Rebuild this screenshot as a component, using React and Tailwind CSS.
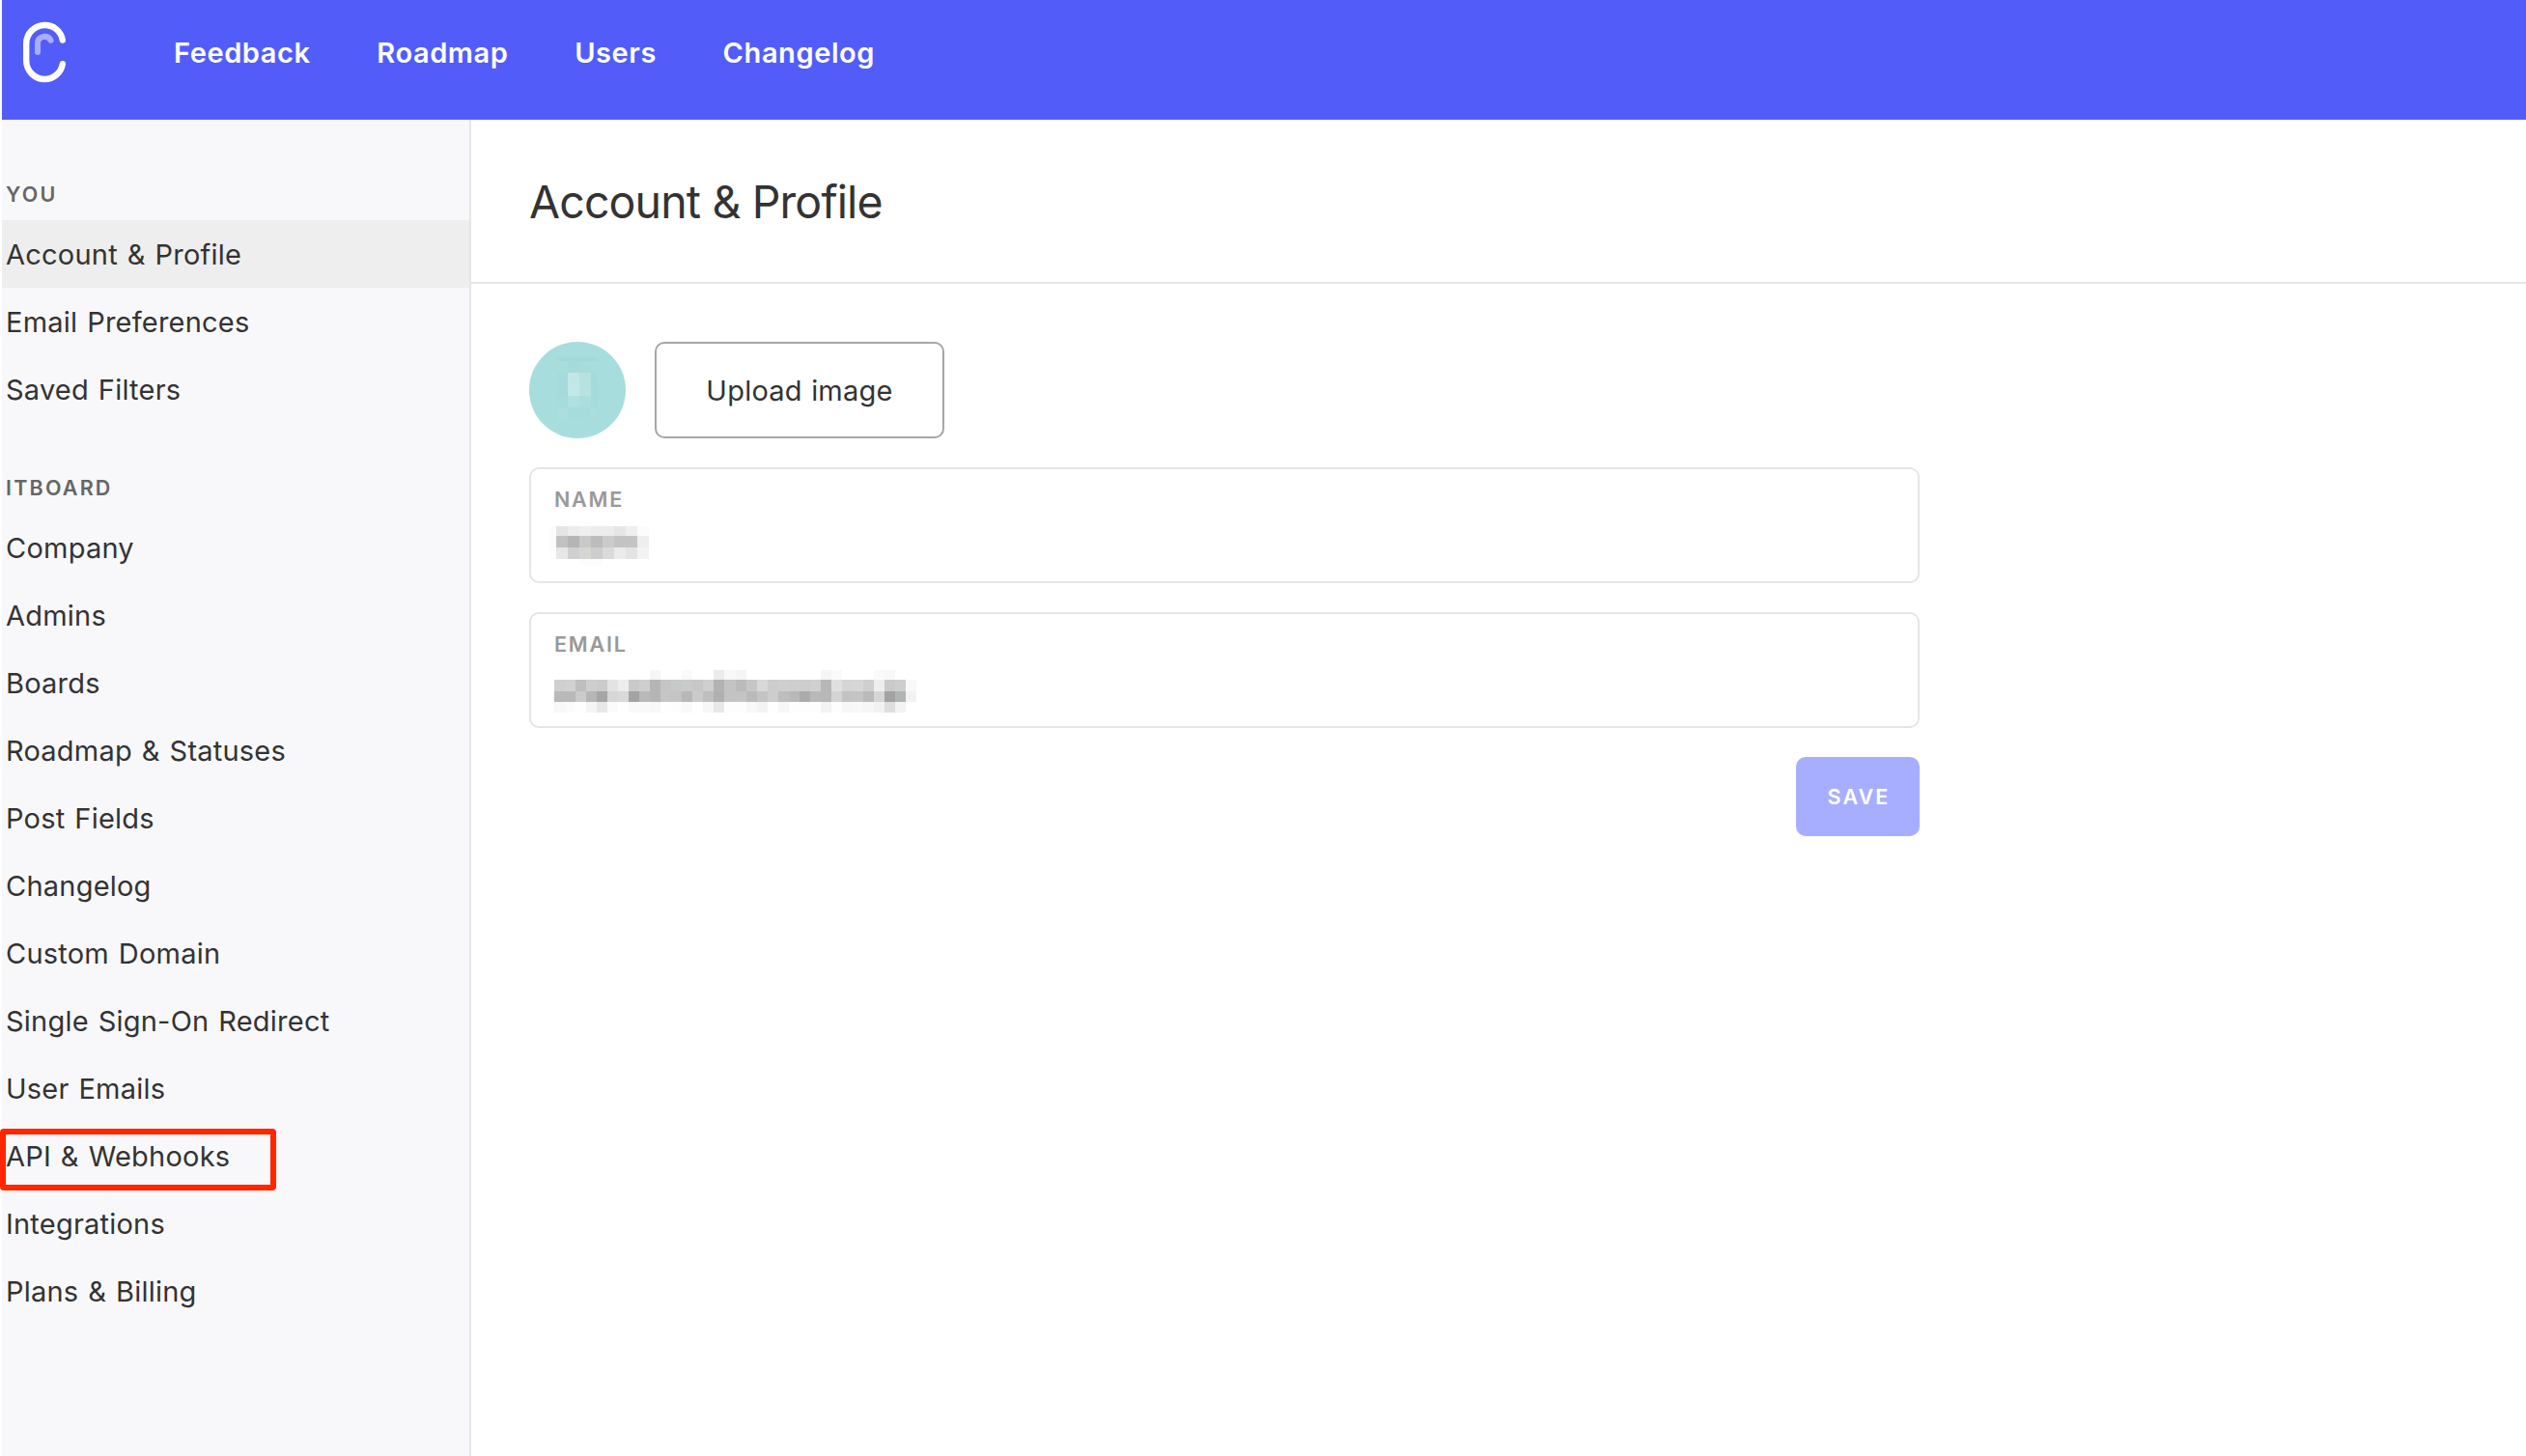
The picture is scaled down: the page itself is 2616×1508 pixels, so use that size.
const navLinks = ["Feedback", "Roadmap", "Users", "Changelog"];

const sections = [
  {
    title: "YOU",
    items: [
      { label: "Account & Profile", active: true },
      { label: "Email Preferences" },
      { label: "Saved Filters" },
    ],
  },
  {
    title: "ITBOARD",
    items: [
      { label: "Company" },
      { label: "Admins" },
      { label: "Boards" },
      { label: "Roadmap & Statuses" },
      { label: "Post Fields" },
      { label: "Changelog" },
      { label: "Custom Domain" },
      { label: "Single Sign-On Redirect" },
      { label: "User Emails" },
      { label: "API & Webhooks", marked: true },
      { label: "Integrations" },
      { label: "Plans & Billing" },
    ],
  },
];

// Redacted values: column edges, row edges and one colour per cell
const nameMosaic = {
  xs: [0, 7, 19, 31, 43, 55, 67, 79, 91, 103],
  ys: [0, 10, 22, 34, 41],
  rows: [
    "fcfcfc e5e5e5 ececec efefef ececec ececec e6e6e6 efefef fcfcfc",
    "fbfbfb c1c1c1 b5b5b5 c9c9c9 bcbcbc cbcbcb c4c4c4 c4c4c4 eeeeee",
    "fdfdfd e7e7e7 d0d0d0 d6d6d2 cdcdcd dadada ebebeb e3e3e3 f3f3f3",
    "ffffff ffffff ffffff fcfcfc fcfcfc ffffff ffffff ffffff ffffff",
  ],
};

const emailMosaic = {
  xs: Array.from({ length: 35 }, (_, i) => Math.round(i * 11.03)),
  ys: [0, 10, 22, 33, 44],
  rows: [
    "ffffff ffffff ffffff ffffff ffffff ffffff ffffff ffffff ffffff f5f5f5 ffffff ffffff fafafa ffffff ffffff ebebeb f8f8f8 f5f5f5 ffffff ffffff ffffff ffffff ffffff ffffff ffffff f5f5f5 fafafa ffffff ffffff ffffff fafafa f8f8f8 ffffff ffffff",
    "cfcfcf d1d1d1 bfbfbf cecece cbcbcb e3e3e3 ededed cacaca cecece b5b5b5 c5c5c5 c5c9c9 cacaca c7c7c7 cfcfcf b2b2b2 c3c3c3 bbbbbb c6c6c6 d8d8d8 cdcdcd cfcfcf cecece cdcdcd d0d0d0 b7b7b7 e0e0e0 d5d5d5 d7d7d7 cfcfcf eeeeee cacaca cdcdcd f9f9f7",
    "b9b9b9 b9b9b9 cbcbcb b6b6b6 a6a6a6 d7d7d7 d9d9d9 a3a3a3 b9b9b9 b5b5b5 c6c6c6 c4c4c4 b8b8b8 cbcbcb bfbfbf b0b0b0 c3c3c3 c4c4c4 bababa c4c4c4 cdcdcd bebebe b9b9b9 ababab b9b9b9 b8b8b8 d4d4d4 c3c3c3 c5c5c5 bababa d6d6d6 a2a2a2 b0b4b3 f2f2f2",
    "f8f8f8 fbfbfb fefefe f5f5f5 e8e8e8 fbfbfb ffffff f9f9f9 f9f9f9 f7f7f7 fefefe fdfdfd f9f9f9 fefefe f7f7f7 e8e8e8 fdfdfd fdfdfd f8f8f8 f3f3f3 fefefe f7f7f7 fdfdfd fdfdfd fdfdfd f3f3f3 fdfdfd f7f7f7 f8f8f8 f6f6f6 f2f2f2 dedede f3f3f3 ffffff",
  ],
};

const avatarMosaic = {
  xs: [0, 11, 23, 35, 42],
  ys: [0, 4, 16, 28, 40, 52, 64],
  rows: [
    "a0dada a0dada a0dada a0dada",
    "a9dddb a5dcdb a6dcdb a9dddb",
    "a5dbdb c3e7e7 b6e2e1 a4dada",
    "a4dbdb c3e8e8 b8e2e2 a4dbdb",
    "a6dcdc b1e0e0 acdedd a5dbdb",
    "abdedc a6dcdc a6dcdc aadedd",
  ],
};

function Mosaic({ data, className }) {
  const { xs, ys, rows } = data;
  const width = xs[xs.length - 1];
  const height = ys[ys.length - 1];

  return (
    <svg
      width={width}
      height={height}
      viewBox={`0 0 ${width} ${height}`}
      shapeRendering="crispEdges"
      className={className}
      aria-hidden="true"
    >
      {rows.map((row, r) =>
        row.split(" ").map((color, c) => (
          <rect
            key={`${r}-${c}`}
            x={xs[c]}
            y={ys[r]}
            width={xs[c + 1] - xs[c]}
            height={ys[r + 1] - ys[r]}
            fill={`#${color}`}
          />
        ))
      )}
    </svg>
  );
}

function Logo() {
  return (
    <svg width="48" height="66" viewBox="0 0 48 66" fill="none" strokeLinecap="round" className="shrink-0">
      <path
        d="M42.8 21.6C41.3 12.4 33.6 6 24.4 6C13.8 6 5.2 14.6 5.2 25.2V42.8C5.2 53.4 13.8 62 24.4 62C33.6 62 41.3 55.4 42.8 46.2"
        stroke="#fff"
        strokeWidth="6.4"
      />
      <path d="M17 34V25.2C17 17.2 27 15.5 30.6 21.7" stroke="#a8adff" strokeWidth="6" />
    </svg>
  );
}

function Header() {
  return (
    <header className="flex h-[124px] items-start bg-[#525df9] pl-5">
      <div className="pt-5">
        <Logo />
      </div>
      <nav className="ml-[110px] flex gap-[68.7px]">
        {navLinks.map((link) => (
          <a key={link} href="#" className="text-[29px] leading-[109px] font-semibold tracking-[0.58px] text-white">
            {link}
          </a>
        ))}
      </nav>
    </header>
  );
}

function SidebarItem({ item }) {
  return (
    <li className={item.active ? "relative h-[70px] bg-[#eeeeee]" : "relative h-[70px]"}>
      <a href="#" className="block pl-[4px] text-[29px] leading-[72px] tracking-[0.22px] [word-spacing:1.5px] whitespace-nowrap text-[#333333]">
        {item.label}
      </a>
      {item.marked && (
        <div className="absolute top-[7px] -left-[2px] h-[64px] w-[286px] rounded-[4px] border-[6px] border-[#ff2600]" />
      )}
    </li>
  );
}

function Sidebar() {
  return (
    <aside className="w-[486px] shrink-0 border-r-2 border-[#e5e5e5] bg-[#f8f8fb] pt-[61px]">
      {sections.map((section) => (
        <section key={section.title} className="mb-[51px]">
          <h2 className="h-[43px] pl-[4px] text-[21.5px] leading-[32px] font-semibold tracking-[2.2px] text-[#666666]">
            {section.title}
          </h2>
          <ul>
            {section.items.map((item) => (
              <SidebarItem key={item.label} item={item} />
            ))}
          </ul>
        </section>
      ))}
    </aside>
  );
}

function Field({ label, children }) {
  return (
    <div className="h-[120px] rounded-[10px] border-2 border-[#e5e5e5] pt-5 pl-6">
      <div className="text-[21.5px] leading-[22px] font-semibold tracking-[1.8px] text-[#999999]">{label}</div>
      {children}
    </div>
  );
}

export default function App() {
  return (
    <div className="flex h-[1508px] w-[2616px] flex-col overflow-hidden bg-white pl-[2px] font-['Inter',sans-serif]">
      <Header />
      <div className="flex flex-1">
        <Sidebar />
        <main className="flex-1">
          <div className="flex h-[170px] items-center border-b-2 border-[#e5e5e5] pt-[2px] pl-[60px]">
            <h1 className="text-[46.5px] leading-[56px] tracking-[-0.87px] text-[#333333]">Account &amp; Profile</h1>
          </div>
          <div className="flex w-[1500px] flex-col gap-[30px] pt-[60px] pl-[60px]">
            <div className="flex gap-[30px]">
              <div className="flex size-[100px] justify-center rounded-full bg-[#a8dddd] pt-4">
                <Mosaic data={avatarMosaic} />
              </div>
              <button className="h-[100px] w-[300px] rounded-[10px] border-2 border-[#a6a6a6] pt-[2px] text-[29px] tracking-[0.22px] [word-spacing:1px] text-[#333333]">
                Upload image
              </button>
            </div>
            <Field label="NAME">
              <Mosaic data={nameMosaic} className="mt-[17px] -ml-[5px]" />
            </Field>
            <Field label="EMAIL">
              <Mosaic data={emailMosaic} className="mt-[16px]" />
            </Field>
            <button className="h-[82px] w-[128px] self-end rounded-[10px] bg-[#a8aeff] pl-[2px] text-[21.5px] font-semibold tracking-[2.1px] text-white">
              SAVE
            </button>
          </div>
        </main>
      </div>
    </div>
  );
}
